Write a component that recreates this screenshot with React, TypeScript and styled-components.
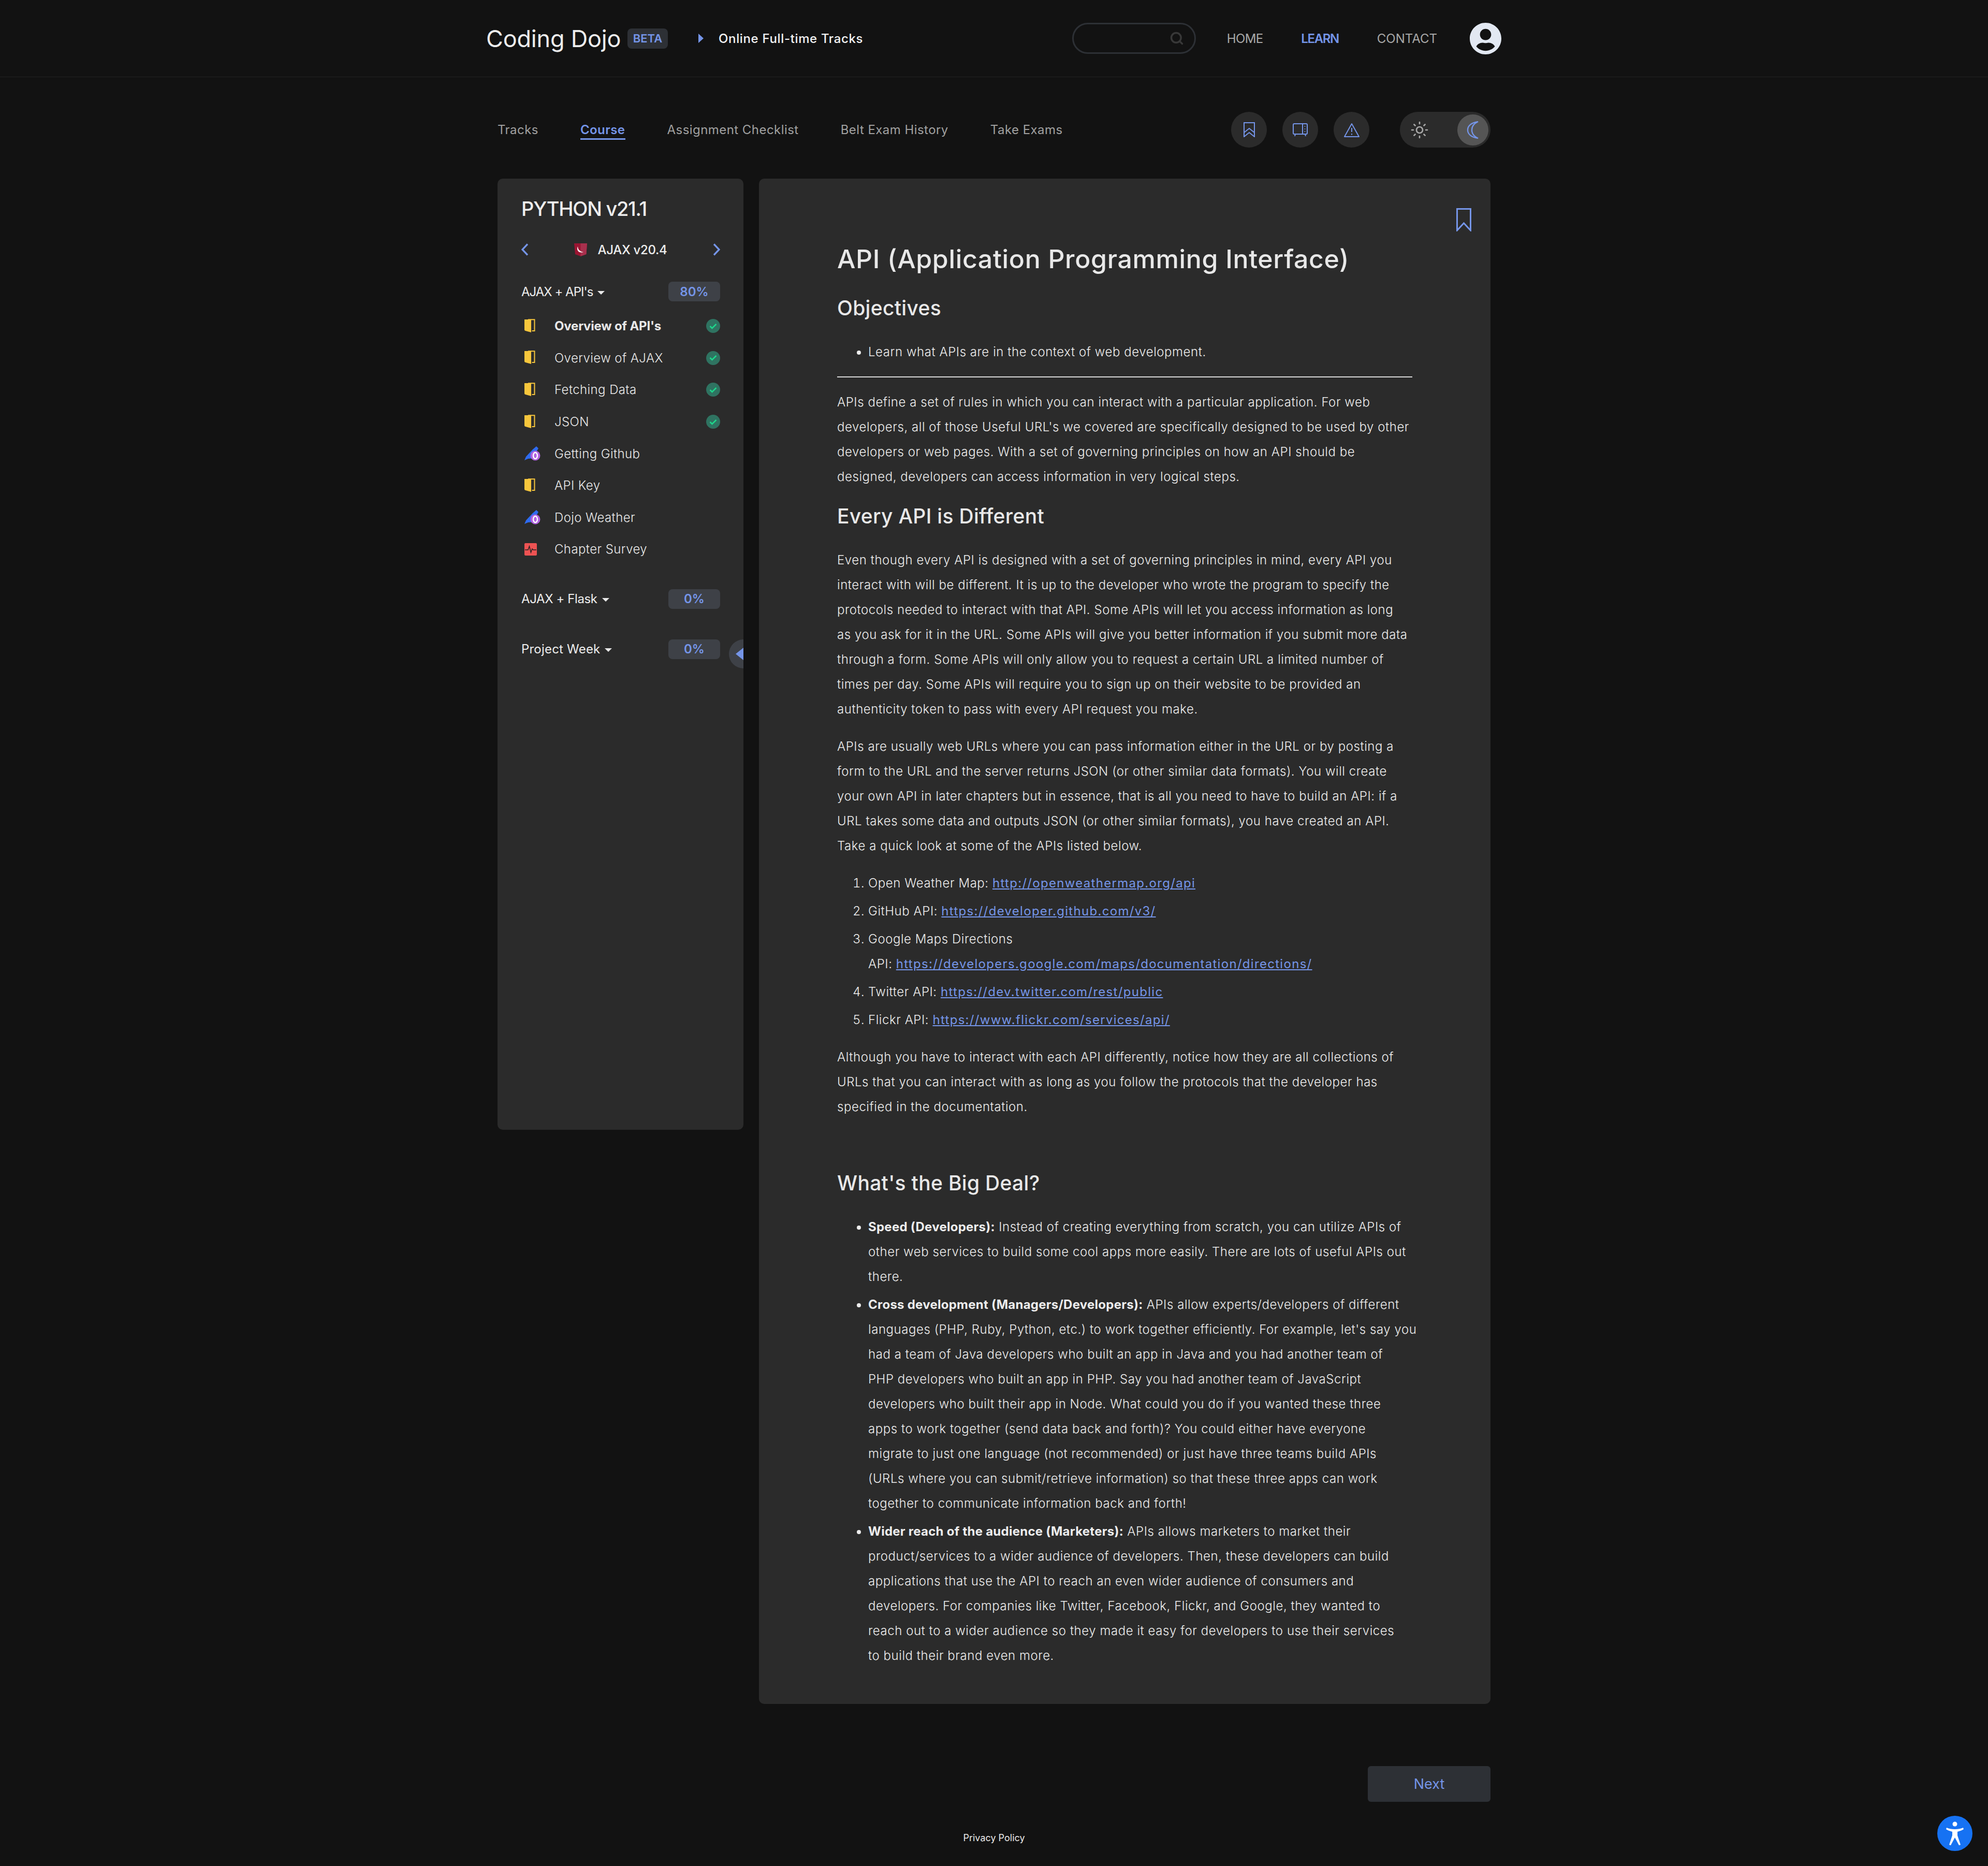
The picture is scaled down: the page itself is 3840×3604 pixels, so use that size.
import React from "react";
import styled, { createGlobalStyle } from "styled-components";
import { FaUserCircle } from "react-icons/fa";
import { Search, Sun } from "lucide-react";

const GlobalStyle = createGlobalStyle`
  html, body {
    margin: 0;
    padding: 0;
    background: #121212;
    color: #e8e8e8;
    font-family: Inter, "Open Sans", sans-serif;
  }
`;

const BLUE = "#7595e8";

const TopBar = styled.header`
  height: 148px;
  border-bottom: 1px solid #222222;
  display: flex;
  justify-content: center;
`;

const TopInner = styled.div`
  width: 1962px;
  display: flex;
  align-items: center;
`;

const Brand = styled.div`
  font-size: 45px;
  font-weight: 400;
  letter-spacing: -0.2px;
  color: #ededed;
  width: 258px;
  white-space: nowrap;
`;

const Beta = styled.span`
  margin-left: 15px;
  width: 78px;
  height: 39px;
  border-radius: 8px;
  background: #2d3035;
  color: ${BLUE};
  font-size: 22px;
  font-weight: 600;
  display: flex;
  align-items: center;
  justify-content: center;
`;

const Crumb = styled.div`
  margin-left: 59px;
  display: flex;
  align-items: center;
  gap: 29px;
  font-size: 24px;
  font-weight: 500;
  letter-spacing: 0.65px;
  color: #f2f2f2;
`;

const CrumbArrow = styled.span`
  width: 0;
  height: 0;
  border-top: 9px solid transparent;
  border-bottom: 9px solid transparent;
  border-left: 10px solid ${BLUE};
`;

const SearchBox = styled.div`
  margin-left: auto;
  width: 239px;
  height: 60px;
  box-sizing: border-box;
  border: 3px solid #2d3035;
  border-radius: 30px;
  display: flex;
  align-items: center;
  justify-content: flex-end;
  padding-right: 20px;
  color: #383838;
`;

const TopLink = styled.a<{ $active?: boolean; $spacing?: number }>`
  font-size: 24px;
  font-weight: ${(p) => (p.$active ? 600 : 400)};
  letter-spacing: ${(p) => p.$spacing ?? 0}px;
  color: ${(p) => (p.$active ? BLUE : "#a8a8a8")};
  white-space: nowrap;
`;

const TopLinks = styled.nav`
  margin-left: 60px;
  display: flex;
  gap: 74px;
`;

const Avatar = styled.div`
  margin-left: 62px;
  display: flex;
  color: #e2e8f2;
`;

const Wrap = styled.div`
  width: 1918px;
  margin: 0 auto;
`;

const SubNav = styled.div`
  height: 196px;
  box-sizing: border-box;
  padding-top: 67px;
  display: flex;
  align-items: flex-start;
`;

const Tabs = styled.div`
  display: flex;
  gap: 81px;
  height: 69px;
  align-items: center;
`;

const Tab = styled.a<{ $active?: boolean }>`
  font-size: 24px;
  font-weight: ${(p) => (p.$active ? 600 : 400)};
  letter-spacing: 0.45px;
  color: ${(p) => (p.$active ? BLUE : "#a0a0a0")};
  padding: 4px 0 2px;
  border-bottom: 3px solid ${(p) => (p.$active ? BLUE : "transparent")};
  white-space: nowrap;
`;

const Tools = styled.div`
  margin-left: auto;
  display: flex;
  gap: 30px;
`;

const ToolButton = styled.button`
  width: 69px;
  height: 69px;
  border: 0;
  padding: 0;
  border-radius: 50%;
  background: #2b2b2b;
  display: flex;
  align-items: center;
  justify-content: center;
`;

const Toggle = styled.div`
  margin-left: 59px;
  width: 175px;
  height: 69px;
  border-radius: 35px;
  background: #2b2b2b;
  display: flex;
  align-items: center;
  justify-content: space-between;
  padding: 0 4px 0 20px;
  box-sizing: border-box;
  color: #a8a8a8;
`;

const ToggleKnob = styled.div`
  width: 60px;
  height: 60px;
  border-radius: 50%;
  background: #555555;
  display: flex;
  align-items: center;
  justify-content: center;
`;

const Columns = styled.div`
  display: grid;
  grid-template-columns: 475px 1413px;
  gap: 30px;
  align-items: start;
`;

const Sidebar = styled.aside`
  position: relative;
  height: 1837px;
  box-sizing: border-box;
  padding: 0 45px 0 46px;
  background: #2b2b2b;
  border-radius: 10px;
  overflow: hidden;
`;

const SideTitle = styled.h2`
  margin: 28px 0 0;
  font-size: 38px;
  line-height: 60px;
  font-weight: 500;
  letter-spacing: -1.3px;
  color: #ededed;
`;

const ChapterNav = styled.div`
  margin-top: 19px;
  height: 60px;
  display: flex;
  align-items: center;
  justify-content: space-between;
  color: ${BLUE};
`;

const ChapterName = styled.div`
  display: flex;
  align-items: center;
  gap: 19px;
  font-size: 24px;
  font-weight: 500;
  letter-spacing: -0.3px;
  color: #ededed;
`;

const SectionRow = styled.div<{ $top: number }>`
  margin-top: ${(p) => p.$top}px;
  height: 38px;
  display: flex;
  align-items: center;
  justify-content: space-between;
`;

const SectionName = styled.div<{ $spacing: number }>`
  display: flex;
  align-items: center;
  gap: 9px;
  font-size: 24px;
  font-weight: 400;
  letter-spacing: ${(p) => p.$spacing}px;
  color: #ededed;
`;

const Caret = styled.span`
  width: 0;
  height: 0;
  border-left: 7px solid transparent;
  border-right: 7px solid transparent;
  border-top: 7px solid #e8e8e8;
  margin-top: 4px;
`;

const Percent = styled.div`
  width: 100px;
  height: 38px;
  border-radius: 8px;
  background: #3e4147;
  color: ${BLUE};
  font-size: 24px;
  font-weight: 600;
  display: flex;
  align-items: center;
  justify-content: center;
`;

const Items = styled.ul`
  list-style: none;
  margin: 17px 0 0;
  padding: 0;
  display: flex;
  flex-direction: column;
`;

const Item = styled.li<{ $bold?: boolean }>`
  height: 61.6px;
  display: flex;
  align-items: center;
  font-size: 24px;
  font-weight: ${(p) => (p.$bold ? 700 : 300)};
  letter-spacing: ${(p) => (p.$bold ? -0.2 : 0.4)}px;
  color: #e8e8e8;
`;

const ItemIcon = styled.span`
  width: 64px;
  padding-left: 6px;
  box-sizing: border-box;
  display: flex;
`;

const Check = styled.span`
  margin-left: auto;
  width: 27px;
  height: 27px;
  border-radius: 50%;
  background: #2f7361;
  display: flex;
  align-items: center;
  justify-content: center;
`;

const CollapseHandle = styled.div`
  position: absolute;
  left: 447px;
  top: 890px;
  width: 56px;
  height: 56px;
  border-radius: 50%;
  background: #3e4147;
  &::after {
    content: "";
    position: absolute;
    left: 13px;
    top: 16px;
    border-top: 12px solid transparent;
    border-bottom: 12px solid transparent;
    border-right: 15px solid ${BLUE};
  }
`;

const Lesson = styled.main`
  position: relative;
  box-sizing: border-box;
  padding: 119px 151px 69px;
  background: #2b2b2b;
  border-radius: 10px;
  font-size: 24px;
  line-height: 48px;
  font-weight: 350;
  letter-spacing: 0.55px;
  color: #ececec;
  white-space: nowrap;
`;

const Bookmark = styled.div`
  position: absolute;
  right: 37px;
  top: 57px;
  display: flex;
`;

const H1 = styled.h1`
  margin: 0 0 29px;
  font-size: 50px;
  line-height: 72px;
  font-weight: 500;
  letter-spacing: 0.65px;
  color: #e8e8e8;
`;

const H2 = styled.h2<{ $top?: number }>`
  margin: ${(p) => p.$top ?? -2}px 0 31px;
  font-size: 39px;
  line-height: 60px;
  font-weight: 500;
  letter-spacing: 0.3px;
  color: #e8e8e8;
`;

const Para = styled.p`
  margin: 0 0 24px;
`;

const Rule = styled.hr`
  margin: 23px 0 24px;
  height: 2px;
  border: 0;
  background: #d8d8d8;
`;

const Bullets = styled.ul`
  margin: 0;
  padding-left: 60px;
  & > li + li {
    margin-top: 6px;
  }
`;

const Numbers = styled.ol`
  margin: 0 0 24px;
  padding-left: 60px;
  & > li + li {
    margin-top: 6px;
  }
`;

const Link = styled.a`
  color: ${BLUE};
  font-weight: 400;
  letter-spacing: 1.3px;
  text-decoration: underline;
`;

const Strong = styled.strong`
  font-weight: 700;
  letter-spacing: 0.25px;
  color: #ededed;
`;

const NextRow = styled.div`
  margin-top: 120px;
  display: flex;
  justify-content: flex-end;
`;

const NextButton = styled.button`
  width: 237px;
  height: 69px;
  border: 0;
  border-radius: 6px;
  background: #2d3035;
  color: ${BLUE};
  font-family: inherit;
  font-size: 27px;
  font-weight: 400;
`;

const Footer = styled.footer`
  margin-top: 58px;
  height: 66px;
  font-size: 18px;
  line-height: 24px;
  text-align: center;
  color: #e8e8e8;
`;

const AccessButton = styled.div`
  position: fixed;
  right: 30px;
  bottom: 29px;
  width: 68px;
  height: 68px;
  border-radius: 50%;
  background: #1672f3;
  display: flex;
  align-items: center;
  justify-content: center;
`;

const Lines: React.FC<{ lines: string[] }> = ({ lines }) => (
  <>
    {lines.map((line, i) => (
      <React.Fragment key={i}>
        {i > 0 && <br />}
        {line}
      </React.Fragment>
    ))}
  </>
);

const DoorIcon = () => (
  <svg width="22" height="28" viewBox="0 0 22 28">
    <path d="M0 1 L13 1 L13 26 L2 23 Q0 22.5 0 21 Z" fill="#f7c63c" />
    <path d="M7 1.2 H19.5 V23 H14.5" fill="none" stroke="#f7c63c" strokeWidth="2" />
  </svg>
);

const PenIcon = () => (
  <svg width="32" height="28" viewBox="0 0 32 28">
    <path d="M0 27 L3 20 L16 6 L23 0 L27 4 L24 9 L19 23 L7 24 Z" fill="#2f6bf0" />
    <circle cx="21" cy="18" r="9.5" fill="#b163e0" />
    <ellipse cx="21" cy="18" rx="4" ry="6" fill="none" stroke="#ffffff" strokeWidth="2.4" />
  </svg>
);

const SurveyIcon = () => (
  <svg width="24" height="24" viewBox="0 0 24 24">
    <rect width="24" height="24" rx="2" fill="#ee5353" />
    <path d="M1 13 H7 L9.5 6 L12.5 18 L15 11 L17 13 H23" fill="none" stroke="#222222" strokeWidth="1.5" />
  </svg>
);

const ShieldIcon = () => (
  <svg width="26" height="26" viewBox="0 0 26 26">
    <path d="M0 1 H25 L23.5 22 L12.5 26 L2 22 Z" fill="#9a1532" />
    <path d="M12.5 1 H25 L23.5 22 L12.5 26 Z" fill="#a8304d" />
    <path d="M7 7 Q7 16 18 18 Q10 20 7 15 Q5 11 7 7 Z" fill="#ffffff" />
  </svg>
);

const CheckMark = () => (
  <svg width="15" height="12" viewBox="0 0 15 12">
    <path d="M1.5 6 L5.5 10 L13.5 2" fill="none" stroke="#1ed68b" strokeWidth="2.6" />
  </svg>
);

const Chevron: React.FC<{ flip?: boolean }> = ({ flip }) => (
  <svg width="14" height="26" viewBox="0 0 14 26" fill="none" stroke={BLUE} strokeWidth="3.4">
    <path d={flip ? "M2 2.5 L12 13 L2 23.5" : "M12 2.5 L2 13 L12 23.5"} />
  </svg>
);

const ToolBookmark = () => (
  <svg width="22" height="29" viewBox="0 0 22 29" fill="none" stroke={BLUE} strokeWidth="2">
    <path d="M1 28 V1 H21 V28 L11 20 Z" />
    <path d="M1 20 L11 12 L21 20" />
  </svg>
);

const ToolBook = () => (
  <svg width="29" height="26" viewBox="0 0 29 26" fill="none" stroke={BLUE} strokeWidth="2">
    <rect x="1" y="1" width="27" height="20" rx="2" />
    <path d="M19 1 V21" />
    <path d="M23.5 5 V7 M23.5 10 V12 M23.5 15 V17" strokeWidth="1.4" />
    <path d="M5 21 L4 25 M24 21 L25 25" />
  </svg>
);

const ToolAlert = () => (
  <svg width="30" height="28" viewBox="0 0 30 28" fill="none" stroke={BLUE} strokeWidth="2">
    <path d="M15 2 L29 27 H1 Z" strokeLinejoin="round" />
    <path d="M15 10 V18 M15 21 V23.5" />
  </svg>
);

const MoonIcon = () => (
  <svg width="24" height="34" viewBox="0 0 24 34">
    <path d="M22 1 C9 3 2 9 2 17 C2 25 9 31 22 33 C13 29 10 23 10 17 C10 11 13 5 22 1 Z" fill="none" stroke={BLUE} strokeWidth="2.4" />
  </svg>
);

const SmallBookmark = () => (
  <svg width="29" height="45" viewBox="0 0 29 45" fill="none" stroke={BLUE} strokeWidth="3">
    <path d="M1.5 43 V1.5 H27.5 V43 L14.5 29 Z" />
  </svg>
);

const AccessIcon = () => (
  <svg width="44" height="48" viewBox="0 0 44 48" fill="#ffffff">
    <circle cx="22" cy="6" r="4.5" />
    <path d="M6 13 C14 17 30 17 38 13 L39 16 C34 19 29 20 27 21 V28 L33 46 L30 47 L22 32 L14 47 L11 46 L17 28 V21 C15 20 10 19 5 16 Z" />
  </svg>
);

const lessons = [
  { name: "Overview of API's", icon: <DoorIcon />, done: true, bold: true },
  { name: "Overview of AJAX", icon: <DoorIcon />, done: true },
  { name: "Fetching Data", icon: <DoorIcon />, done: true },
  { name: "JSON", icon: <DoorIcon />, done: true },
  { name: "Getting Github", icon: <PenIcon /> },
  { name: "API Key", icon: <DoorIcon /> },
  { name: "Dojo Weather", icon: <PenIcon /> },
  { name: "Chapter Survey", icon: <SurveyIcon /> },
];

const App: React.FC = () => (
  <>
    <GlobalStyle />
    <TopBar>
      <TopInner>
        <Brand>Coding Dojo</Brand>
        <Beta>BETA</Beta>
        <Crumb>
          <CrumbArrow />
          Online Full-time Tracks
        </Crumb>
        <SearchBox>
          <Search size={28} strokeWidth={3} />
        </SearchBox>
        <TopLinks>
          <TopLink $spacing={-0.7}>HOME</TopLink>
          <TopLink $active $spacing={-1.4}>LEARN</TopLink>
          <TopLink>CONTACT</TopLink>
        </TopLinks>
        <Avatar>
          <FaUserCircle size={63} />
        </Avatar>
      </TopInner>
    </TopBar>
    <Wrap>
      <SubNav>
        <Tabs>
          <Tab>Tracks</Tab>
          <Tab $active>Course</Tab>
          <Tab>Assignment Checklist</Tab>
          <Tab>Belt Exam History</Tab>
          <Tab>Take Exams</Tab>
        </Tabs>
        <Tools>
          <ToolButton><ToolBookmark /></ToolButton>
          <ToolButton><ToolBook /></ToolButton>
          <ToolButton><ToolAlert /></ToolButton>
        </Tools>
        <Toggle>
          <Sun size={36} strokeWidth={1.8} />
          <ToggleKnob><MoonIcon /></ToggleKnob>
        </Toggle>
      </SubNav>
      <Columns>
        <Sidebar>
          <SideTitle>PYTHON v21.1</SideTitle>
          <ChapterNav>
            <Chevron />
            <ChapterName>
              <ShieldIcon />
              AJAX v20.4
            </ChapterName>
            <Chevron flip />
          </ChapterNav>
          <SectionRow $top={32}>
            <SectionName $spacing={-1}>AJAX + API's <Caret /></SectionName>
            <Percent>80%</Percent>
          </SectionRow>
          <Items>
            {lessons.map((l) => (
              <Item key={l.name} $bold={l.bold}>
                <ItemIcon>{l.icon}</ItemIcon>
                {l.name}
                {l.done && <Check><CheckMark /></Check>}
              </Item>
            ))}
          </Items>
          <SectionRow $top={46}>
            <SectionName $spacing={-0.4}>AJAX + Flask <Caret /></SectionName>
            <Percent>0%</Percent>
          </SectionRow>
          <SectionRow $top={59}>
            <SectionName $spacing={0.2}>Project Week <Caret /></SectionName>
            <Percent>0%</Percent>
          </SectionRow>
          <CollapseHandle />
        </Sidebar>
        <Lesson>
          <Bookmark><SmallBookmark /></Bookmark>
          <H1>API (Application Programming Interface)</H1>
          <H2 $top={0}>Objectives</H2>
          <Bullets>
            <li>Learn what APIs are in the context of web development.</li>
          </Bullets>
          <Rule />
          <Para>
            <Lines lines={[
              "APIs define a set of rules in which you can interact with a particular application. For web",
              "developers, all of those Useful URL's we covered are specifically designed to be used by other",
              "developers or web pages. With a set of governing principles on how an API should be",
              "designed, developers can access information in very logical steps.",
            ]} />
          </Para>
          <H2>Every API is Different</H2>
          <Para>
            <Lines lines={[
              "Even though every API is designed with a set of governing principles in mind, every API you",
              "interact with will be different. It is up to the developer who wrote the program to specify the",
              "protocols needed to interact with that API. Some APIs will let you access information as long",
              "as you ask for it in the URL. Some APIs will give you better information if you submit more data",
              "through a form. Some APIs will only allow you to request a certain URL a limited number of",
              "times per day. Some APIs will require you to sign up on their website to be provided an",
              "authenticity token to pass with every API request you make.",
            ]} />
          </Para>
          <Para>
            <Lines lines={[
              "APIs are usually web URLs where you can pass information either in the URL or by posting a",
              "form to the URL and the server returns JSON (or other similar data formats). You will create",
              "your own API in later chapters but in essence, that is all you need to have to build an API: if a",
              "URL takes some data and outputs JSON (or other similar formats), you have created an API.",
              "Take a quick look at some of the APIs listed below.",
            ]} />
          </Para>
          <Numbers>
            <li>Open Weather Map: <Link>http://openweathermap.org/api</Link></li>
            <li>GitHub API: <Link>https://developer.github.com/v3/</Link></li>
            <li>Google Maps Directions<br />API: <Link>https://developers.google.com/maps/documentation/directions/</Link></li>
            <li>Twitter API: <Link>https://dev.twitter.com/rest/public</Link></li>
            <li>Flickr API: <Link>https://www.flickr.com/services/api/</Link></li>
          </Numbers>
          <Para>
            <Lines lines={[
              "Although you have to interact with each API differently, notice how they are all collections of",
              "URLs that you can interact with as long as you follow the protocols that the developer has",
              "specified in the documentation.",
            ]} />
          </Para>
          <H2 $top={93}>What's the Big Deal?</H2>
          <Bullets>
            <li>
              <Strong>Speed (Developers):</Strong>{" "}
              <Lines lines={[
                "Instead of creating everything from scratch, you can utilize APIs of",
                "other web services to build some cool apps more easily. There are lots of useful APIs out",
                "there.",
              ]} />
            </li>
            <li>
              <Strong>Cross development (Managers/Developers):</Strong>{" "}
              <Lines lines={[
                "APIs allow experts/developers of different",
                "languages (PHP, Ruby, Python, etc.) to work together efficiently. For example, let's say you",
                "had a team of Java developers who built an app in Java and you had another team of",
                "PHP developers who built an app in PHP. Say you had another team of JavaScript",
                "developers who built their app in Node. What could you do if you wanted these three",
                "apps to work together (send data back and forth)? You could either have everyone",
                "migrate to just one language (not recommended) or just have three teams build APIs",
                "(URLs where you can submit/retrieve information) so that these three apps can work",
                "together to communicate information back and forth!",
              ]} />
            </li>
            <li>
              <Strong>Wider reach of the audience (Marketers):</Strong>{" "}
              <Lines lines={[
                "APIs allows marketers to market their",
                "product/services to a wider audience of developers. Then, these developers can build",
                "applications that use the API to reach an even wider audience of consumers and",
                "developers. For companies like Twitter, Facebook, Flickr, and Google, they wanted to",
                "reach out to a wider audience so they made it easy for developers to use their services",
                "to build their brand even more.",
              ]} />
            </li>
          </Bullets>
        </Lesson>
      </Columns>
      <NextRow>
        <NextButton>Next</NextButton>
      </NextRow>
    </Wrap>
    <Footer>Privacy Policy</Footer>
    <AccessButton><AccessIcon /></AccessButton>
  </>
);

export default App;
